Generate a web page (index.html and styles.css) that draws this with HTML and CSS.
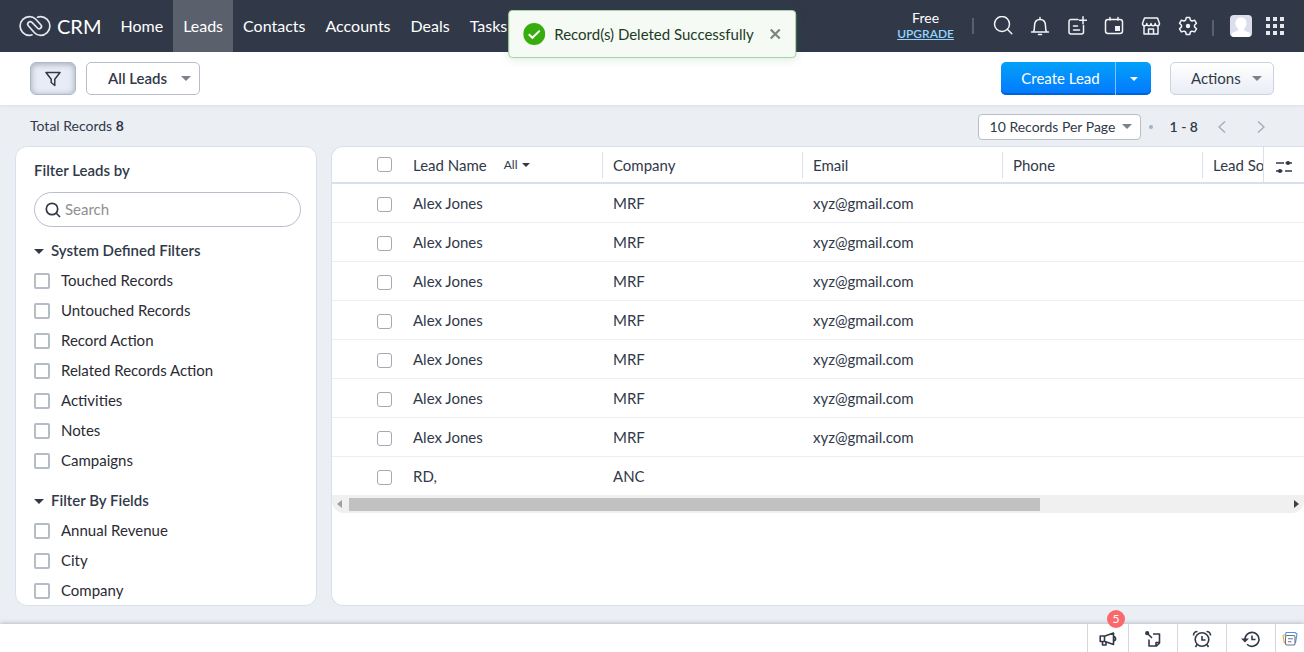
FILE: index.html
```html
<!DOCTYPE html>
<html lang="en">
<head>
<meta charset="utf-8">
<meta name="viewport" content="width=device-width, initial-scale=1">
<title>Leads - CRM</title>
<link rel="stylesheet" href="styles.css">
</head>
<body>
<header class="topbar">
  <a class="brand" href="#">
    <svg width="32" height="22" viewBox="0 0 32 22" fill="none" stroke="#e4e7ee" stroke-width="1.700" stroke-linecap="round" stroke-linejoin="round">
      <path d="M13 19.800C12 20.300 11.300 20.400 10.500 20.400A9.400 9.400 0 1 1 10.500 1.600C13 1.600 15 2.400 16.500 4L21.800 9.800A2.300 2.300 0 0 1 18.400 13L13 7.400A2.500 2.500 0 0 0 9.500 11L15.500 17.800C17 19.500 19 20.400 21.500 20.400A9.400 9.400 0 1 0 21.500 1.600C20.500 1.600 19.500 1.800 18.500 2.200"/>
    </svg>
    <span>CRM</span>
  </a>
  <nav class="nav">
    <a href="#">Home</a>
    <a href="#" class="active" aria-current="page">Leads</a>
    <a href="#">Contacts</a>
    <a href="#">Accounts</a>
    <a href="#">Deals</a>
    <a href="#">Tasks</a>
  </nav>
  <div class="plan"><span>Free</span><a href="#">UPGRADE</a></div>
  <span class="divider"></span>
  <div class="tools">
    <button aria-label="Search"><svg class="ic" viewBox="0 0 20 20"><circle cx="9" cy="8" r="7.500"/><path d="M14.300 13.300l4.500 4.500"/></svg></button>
    <button aria-label="Notifications"><svg class="ic" viewBox="0 0 20 20"><path d="M1.500 16h17M3.500 16c1-2 1-3.500 1-6 0-4 2-6.500 5.500-6.500s5.500 2.500 5.500 6.500c0 2.500 0 4 1 6M10 1.500v2M8.500 18.500h3"/></svg></button>
    <button aria-label="Add"><svg class="ic" viewBox="0 0 20 20"><path d="M11 3.500H4a2 2 0 0 0-2 2V16a2 2 0 0 0 2 2h10.500a2 2 0 0 0 2-2V9.500M16 .8v7M12.500 4.300h7M6.500 10h4M6.500 14h6"/></svg></button>
    <button aria-label="Calendar"><svg class="ic" viewBox="0 0 20 20"><rect x="1.500" y="3.500" width="17" height="14" rx="2.500"/><path d="M6 1.500V4M14 1.500V4"/><path class="solid" d="M11 10h5v5h-5z"/></svg></button>
    <button aria-label="Marketplace"><svg class="ic" viewBox="0 0 20 20"><path d="M3.500 2h13l2 5.500c0 1.500-1 2.300-2.200 2.300S14.200 9 14.200 7.500c0 1.500-1 2.300-2.100 2.300S10 9 10 7.500c0 1.500-1 2.300-2.100 2.300S5.800 9 5.800 7.500c0 1.500-1 2.300-2.100 2.300S1.500 9 1.500 7.500zM3 10v8h14v-8M7.500 18v-5h5v5"/></svg></button>
    <button aria-label="Settings"><svg class="ic" viewBox="0 0 20 20"><path d="M8.300 1.500h3.400l.7 2.600 1.500.9 2.700-.8 1.900 3.100-2 1.900v1.700l2 1.900-1.900 3.100-2.700-.8-1.500.9-.7 2.500H8.300L7.600 16l-1.500-.9-2.700.8-1.900-3.100 2-1.900V9.200l-2-1.900 1.900-3.100 2.700.8 1.500-.9z"/><circle class="solid" cx="10" cy="10" r="2.200"/></svg></button>
  </div>
  <span class="divider low"></span>
  <button class="avatar" aria-label="Account"><svg width="22" height="22" viewBox="0 0 22 22"><rect width="22" height="22" rx="4" fill="#dcdfeb"/><path d="M11 2.500c-3.700 0-5.700 2.700-5.500 6 .2 2.400 1.200 4.200 2.500 5.300v1.700l-5 2c-1 .6-1.500 1.500-1.500 3 .7.900 1.500 1.500 2.500 1.500h14c1 0 1.800-.6 2.500-1.500 0-1.500-.5-2.400-1.500-3l-5-2v-1.700c1.300-1.100 2.300-2.900 2.500-5.300.2-3.300-1.800-6-5.500-6z" fill="#fff"/></svg></button>
  <button class="apps" aria-label="Apps"><svg width="18" height="18" viewBox="0 0 18 18" fill="#e4e7ee"><path d="M0 0h4v4H0zM7 0h4v4H7zM14 0h4v4h-4zM0 7h4v4H0zM7 7h4v4H7zM14 7h4v4h-4zM0 14h4v4H0zM7 14h4v4H7zM14 14h4v4h-4z"/></svg></button>
</header>

<div class="toast" role="status">
  <svg width="22" height="22" viewBox="0 0 22 22"><circle cx="11" cy="11" r="11" fill="#36ac0e"/><path d="M5.500 11.200l3.700 3.600 7.300-7.200" fill="none" stroke="#fff" stroke-width="2"/></svg>
  <span>Record(s) Deleted Successfully</span>
  <button aria-label="Close"><svg width="12" height="12" viewBox="0 0 12 12" stroke="#7e8680" stroke-width="2.200"><path d="M1.500 1.500l9 9M10.500 1.500l-9 9"/></svg></button>
</div>

<div class="toolbar">
  <button class="filter-toggle" aria-label="Toggle filters" aria-pressed="true"><svg width="16" height="16" viewBox="0 0 16 16" fill="none" stroke="#313949" stroke-width="1.500" stroke-linejoin="round"><path d="M1 1.500h14L9.800 8.200v6.300L6.200 11.500V8.200z"/></svg></button>
  <div class="picker view-picker">
    <select aria-label="View"><option>All Leads</option></select>
    <i class="caret"></i>
  </div>
  <div class="split">
    <button class="create">Create Lead</button>
    <button class="more" aria-label="More create options"><i class="caret small"></i></button>
  </div>
  <button class="actions">Actions<i class="caret"></i></button>
</div>

<main class="content">
  <div class="summary">
    <p>Total Records <b>8</b></p>
    <div class="picker page-picker">
      <select aria-label="Records per page"><option>10 Records Per Page</option></select>
      <i class="caret"></i>
    </div>
    <span class="dot"></span>
    <span class="range">1 - 8</span>
    <button class="page" aria-label="Previous page"><svg width="8" height="12" viewBox="0 0 8 12"><path d="M7 .5L1 6l6 5.500"/></svg></button>
    <button class="page" aria-label="Next page"><svg width="8" height="12" viewBox="0 0 8 12"><path d="M1 .5L7 6l-6 5.500"/></svg></button>
  </div>
  <div class="panels">
    <aside class="filters">
      <h2>Filter Leads by</h2>
      <label class="search">
        <svg width="16" height="16" viewBox="0 0 16 16" fill="none" stroke="#313949" stroke-width="1.700"><circle cx="7" cy="7" r="5.700"/><path d="M11 11l4 4"/></svg>
        <input type="search" placeholder="Search" aria-label="Search filters">
      </label>
      <section>
        <h3><i class="caret dark"></i><span>System Defined Filters</span></h3>
        <label><input type="checkbox"><span>Touched Records</span></label>
        <label><input type="checkbox"><span>Untouched Records</span></label>
        <label><input type="checkbox"><span>Record Action</span></label>
        <label><input type="checkbox"><span>Related Records Action</span></label>
        <label><input type="checkbox"><span>Activities</span></label>
        <label><input type="checkbox"><span>Notes</span></label>
        <label><input type="checkbox"><span>Campaigns</span></label>
      </section>
      <section>
        <h3><i class="caret dark"></i><span>Filter By Fields</span></h3>
        <label><input type="checkbox"><span>Annual Revenue</span></label>
        <label><input type="checkbox"><span>City</span></label>
        <label><input type="checkbox"><span>Company</span></label>
      </section>
    </aside>
    <section class="records">
      <div class="grid">
        <table>
          <colgroup><col class="c-check"><col><col><col><col><col></colgroup>
          <thead>
            <tr>
              <th><input type="checkbox" aria-label="Select all"></th>
              <th><span>Lead Name<button class="all">All<i class="caret dark small"></i></button></span></th>
              <th><span>Company</span></th>
              <th><span>Email</span></th>
              <th><span>Phone</span></th>
              <th><span>Lead Source</span></th>
            </tr>
          </thead>
          <tbody>
            <tr><td><input type="checkbox" aria-label="Select row 1"></td><td>Alex Jones</td><td>MRF</td><td>xyz@gmail.com</td><td></td><td></td></tr>
            <tr><td><input type="checkbox" aria-label="Select row 2"></td><td>Alex Jones</td><td>MRF</td><td>xyz@gmail.com</td><td></td><td></td></tr>
            <tr><td><input type="checkbox" aria-label="Select row 3"></td><td>Alex Jones</td><td>MRF</td><td>xyz@gmail.com</td><td></td><td></td></tr>
            <tr><td><input type="checkbox" aria-label="Select row 4"></td><td>Alex Jones</td><td>MRF</td><td>xyz@gmail.com</td><td></td><td></td></tr>
            <tr><td><input type="checkbox" aria-label="Select row 5"></td><td>Alex Jones</td><td>MRF</td><td>xyz@gmail.com</td><td></td><td></td></tr>
            <tr><td><input type="checkbox" aria-label="Select row 6"></td><td>Alex Jones</td><td>MRF</td><td>xyz@gmail.com</td><td></td><td></td></tr>
            <tr><td><input type="checkbox" aria-label="Select row 7"></td><td>Alex Jones</td><td>MRF</td><td>xyz@gmail.com</td><td></td><td></td></tr>
            <tr><td><input type="checkbox" aria-label="Select row 8"></td><td>RD,</td><td>ANC</td><td></td><td></td><td></td></tr>
          </tbody>
        </table>
        <button class="columns" aria-label="Manage columns"><svg width="18" height="14" viewBox="0 0 18 14" stroke="#313949" stroke-width="1.600" fill="#313949"><path d="M1 3h8M10.500 3H17M1 11h6.500M10 11h7"/><circle cx="13" cy="3" r="1.300"/><circle cx="5" cy="11" r="1.300"/></svg></button>
      </div>
      <div class="scrollbar">
        <i class="arrow left"></i>
        <div class="track"><div class="thumb"></div></div>
        <i class="arrow right"></i>
      </div>
    </section>
  </div>
</main>

<footer class="dock">
  <button class="announce" aria-label="Announcements">
    <svg width="18" height="16" viewBox="0 0 18 16" fill="none" stroke="#313949" stroke-width="1.600" stroke-linejoin="round"><path d="M1.200 5H6l8.500-3v11.500L6 10.500H1.200zM5.500 5v5.500M3.500 10.500V14h3.500v-3M14.500 5.500c2.800.5 2.800 4 0 4.500"/></svg>
    <span class="badge">5</span>
  </button>
  <button class="wide" aria-label="Sticky notes"><svg width="18" height="18" viewBox="0 0 18 18" fill="none" stroke="#313949" stroke-width="1.600" stroke-linejoin="round"><path d="M9 4h6.500v9l-3 3H5V9.500M12 16v-3.500h3.500M3 3l5 5"/><circle cx="3.200" cy="3.200" r="1.300" fill="#313949"/></svg></button>
  <button class="wide" aria-label="Reminders"><svg width="20" height="18" viewBox="0 0 20 18" fill="none" stroke="#313949" stroke-width="1.600"><circle cx="10" cy="9.500" r="6.800"/><path d="M10 6v4h3.500M1.500 5.500c0-2.500 1.500-4 4-4M18.500 5.500c0-2.500-1.500-4-4-4M5 14.500L3.500 17M15 14.500l1.500 2.500"/></svg></button>
  <button class="wide" aria-label="Recent items"><svg width="20" height="18" viewBox="0 0 20 18" fill="none" stroke="#313949" stroke-width="1.600"><path d="M4 10A7 7 0 1 1 6 14.300M11 5.500v4h3.500"/><path d="M0 8.500h8L4 12.500z" fill="#313949" stroke="none"/></svg></button>
  <button class="last" aria-label="Collections"><svg width="16" height="16" viewBox="0 0 16 16" fill="#fff" stroke-width="1.100" stroke-linejoin="round"><path d="M3.500 3.500L1 4.500l1.200 7 2 1" stroke="#efa33c"/><path d="M3.500 4.500l.5-3h9l2 1.500-1.500 9" stroke="#4c93e6"/><rect x="3.500" y="4.500" width="9.500" height="9.500" rx="1.500" stroke="#6c7381"/><path d="M6 7.800h5M6 10.700h3.500" stroke="#6c7381"/></svg></button>
</footer>
</body>
</html>
```

FILE: styles.css
```css
* { box-sizing: border-box; }

body {
  margin: 0;
  height: 100vh;
  display: flex;
  flex-direction: column;
  overflow: hidden;
  background: #ebeff4;
  color: #313949;
  font: 15px/20px Lato, "Liberation Sans", sans-serif;
}

button, select, input { font: inherit; color: inherit; }
button { padding: 0; border: 0; background: none; cursor: pointer; }
a { color: inherit; text-decoration: none; }
h2, h3, p { margin: 0; }
svg { display: block; flex: none; }

.caret {
  flex: none;
  border: 5px solid transparent;
  border-top-color: #7c818c;
  border-bottom: 0;
}
.caret.dark { border-top-color: #313949; }
.caret.small { border-width: 4px 4px 0; }

/* Top navigation */
.topbar {
  flex: none;
  height: 52px;
  display: flex;
  align-items: center;
  background: #313949;
  color: #fff;
}
.brand {
  display: flex;
  align-items: center;
  gap: 6px;
  padding: 0 9px 0 19px;
  font-size: 20px;
}
.nav {
  flex: 1;
  align-self: stretch;
  display: flex;
  font-size: 16px;
}
.nav a {
  display: flex;
  align-items: center;
  padding: 0 10px;
}
.nav .active { background: #5a606c; }
.plan {
  display: flex;
  flex-direction: column;
  align-items: center;
  font-size: 14px;
  line-height: 16px;
}
.plan a {
  color: #8fd5ff;
  font-size: 12px;
  font-weight: 600;
  text-decoration: underline;
}
.divider {
  width: 2px;
  height: 16px;
  margin: 0 19px 0 18px;
  background: #596070;
}
.divider.low { margin: 4px 16px 0 14px; }
.tools { display: flex; gap: 17px; }
.ic {
  width: 20px;
  height: 20px;
  fill: none;
  stroke: #f1f3f7;
  stroke-width: 1.5;
  stroke-linecap: round;
  stroke-linejoin: round;
}
.ic .solid { fill: #f1f3f7; stroke: none; }
.apps { margin: 0 20px 0 14px; }

/* Notification */
.toast {
  position: absolute;
  z-index: 2;
  top: 10px;
  left: 50%;
  transform: translateX(-50%);
  height: 48px;
  display: flex;
  align-items: center;
  padding: 0 14px;
  border: 1px solid #a7d3a7;
  border-radius: 4px;
  background: #f5faf5;
  box-shadow: 0 2px 8px #00800022;
  color: #1d3a1f;
  white-space: nowrap;
}
.toast span { margin: 0 15px 0 9px; }

/* Page actions */
.toolbar {
  flex: none;
  height: 53px;
  display: flex;
  align-items: center;
  padding: 0 30px;
  background: #fff;
  box-shadow: 0 1px 3px #31394914;
}
.filter-toggle {
  width: 46px;
  height: 33px;
  display: grid;
  place-items: center;
  margin-right: 10px;
  border: 1px solid #abb9cc;
  border-radius: 6px;
  background: #e8ecf6;
  box-shadow: inset 0 1px 6px #31394966;
}
.picker {
  display: flex;
  align-items: center;
  position: relative;
}
.picker select {
  appearance: none;
  width: 100%;
  height: 100%;
  border: 1px solid #b8bdc9;
  border-radius: 5px;
  background: #fff;
}
.picker .caret {
  position: absolute;
  right: 9px;
  pointer-events: none;
}
.view-picker { width: 114px; height: 33px; }
.view-picker select { padding: 0 21px 2px; font-weight: 600; }
.split {
  height: 33px;
  display: flex;
  margin: 0 19px 0 auto;
  border-radius: 5px;
  overflow: hidden;
  background: linear-gradient(#04a0f8, #0279ff);
  box-shadow: inset 0 -2px 0 #0065d9;
  color: #fff;
}
.create { width: 114px; padding: 0 0 2px 5px; }
.more {
  width: 36px;
  display: grid;
  place-items: center;
  border-left: 1px solid #7ec3ff;
}
.more .caret { border-top-color: #fff; }
.actions {
  width: 104px;
  height: 33px;
  display: flex;
  align-items: center;
  justify-content: space-between;
  padding: 0 11px 1px 20px;
  border: 1px solid #ced1df;
  border-radius: 5px;
  background: linear-gradient(#fff, #e9edf5);
}

/* Record count and paging */
.content {
  flex: 1;
  min-height: 0;
  display: flex;
  flex-direction: column;
  padding: 8px 0 18px;
}
.summary {
  flex: none;
  display: flex;
  align-items: center;
  height: 27px;
  margin-bottom: 6px;
  padding: 0 39px 0 30px;
  font-size: 14px;
}
.summary p { margin-right: auto; padding-bottom: 2px; }
.page-picker { width: 163px; height: 26px; }
.page-picker select { padding: 0 11px; border-radius: 4px; }
.dot {
  width: 4px;
  height: 4px;
  margin: 0 17px 0 8px;
  border-radius: 50%;
  background: #9fb0c7;
}
.range { margin-right: 20px; font-weight: 600; }
.page + .page { margin-left: 31px; }
.page svg { fill: none; stroke: #a9afb9; stroke-width: 1.5; }

/* Panels */
.panels {
  flex: 1;
  min-height: 0;
  display: flex;
  gap: 14px;
  padding-left: 15px;
}
.filters {
  flex: none;
  width: 302px;
  overflow: hidden;
  padding: 13px 15px 0 18px;
  border: 1px solid #d7e1ed;
  border-radius: 12px;
  background: #fff;
}
.filters h2, .filters h3 {
  font-size: 15px;
  font-weight: 600;
}
.search {
  height: 35px;
  display: flex;
  align-items: center;
  gap: 4px;
  margin: 12px 0 9px;
  padding: 0 10px;
  border: 1px solid #b8bdc9;
  border-radius: 18px;
}
.search input {
  min-width: 0;
  flex: 1;
  padding: 0 0 2px;
  border: 0;
  outline: 0;
  background: none;
}
.search input::placeholder { color: #8f8f8f; opacity: 1; }
.filters section { margin-bottom: 10px; }
.filters h3, .filters section label {
  display: flex;
  align-items: center;
  height: 30px;
}
.filters h3 { gap: 7px; }
.filters section label { gap: 11px; color: #2b2b33; }
.filters section span { padding-bottom: 2px; }

input[type="checkbox"] {
  appearance: none;
  flex: none;
  display: block;
  width: 15px;
  height: 15px;
  margin: 0;
  border: 1px solid #a6a8b3;
  border-radius: 3px;
  background: #fff;
}
.filters input[type="checkbox"] {
  width: 16px;
  height: 16px;
  border: 2px solid #b5bcc4;
  border-radius: 2px;
}

/* Records table */
.records {
  flex: 1;
  min-width: 0;
  overflow: hidden;
  border: 1px solid #d7e1ed;
  border-right: 0;
  border-radius: 12px 0 0 12px;
  background: #fff;
}
.grid { position: relative; overflow: hidden; }
table {
  width: 1071px;
  table-layout: fixed;
  border-collapse: separate;
  border-spacing: 0;
}
col { width: 200px; }
.c-check { width: 71px; }
th, td { padding: 0 10px; text-align: left; font-weight: 400; }
th {
  height: 37px;
  border-bottom: 2px solid #d7e1ed;
}
th span {
  height: 26px;
  display: flex;
  align-items: center;
  margin-right: -10px;
  border-right: 1px solid #d7e1ed;
}
td { height: 39px; border-bottom: 1px solid #ebeef3; }
tr:last-child td { height: 38px; border-bottom: 0; }
th:first-child, td:first-child { padding-left: 45px; }
td:first-child { padding-top: 2px; }
.all {
  display: flex;
  align-items: center;
  gap: 5px;
  margin-left: 17px;
  font-size: 12px;
}
.columns {
  position: absolute;
  top: 0;
  right: 0;
  width: 41px;
  height: 35px;
  display: grid;
  place-items: center;
  padding-top: 5px;
  border-left: 1px solid #d7e1ed;
  background: #fff;
}
.scrollbar {
  height: 18px;
  display: flex;
  align-items: center;
  padding: 0 5px;
  border-radius: 0 0 12px 12px;
  background: #f0f0f0;
}
.arrow { border: 4px solid transparent; }
.arrow.left { border-left: 0; border-right: 5px solid #a0a0a0; }
.arrow.right { border-right: 0; border-left: 5px solid #404040; }
.track { flex: 1; margin: 0 11px 0 7px; }
.thumb { width: 74%; height: 13px; background: #c1c1c1; }

/* Bottom dock */
.dock {
  flex: none;
  height: 28px;
  display: flex;
  justify-content: flex-end;
  background: #fff;
  box-shadow: 0 -1px 4px #31394944;
}
.dock button {
  position: relative;
  display: grid;
  place-items: center;
  padding-top: 2px;
  border-left: 1px solid #d4d7dd;
}
.announce { width: 41px; }
.wide { width: 49px; }
.last { width: 29px; }
.dock .badge {
  position: absolute;
  top: -14px;
  right: 3px;
  width: 18px;
  height: 18px;
  border-radius: 50%;
  background: #f9696c;
  color: #fff;
  font-size: 12px;
  line-height: 18px;
  text-align: center;
}
```
